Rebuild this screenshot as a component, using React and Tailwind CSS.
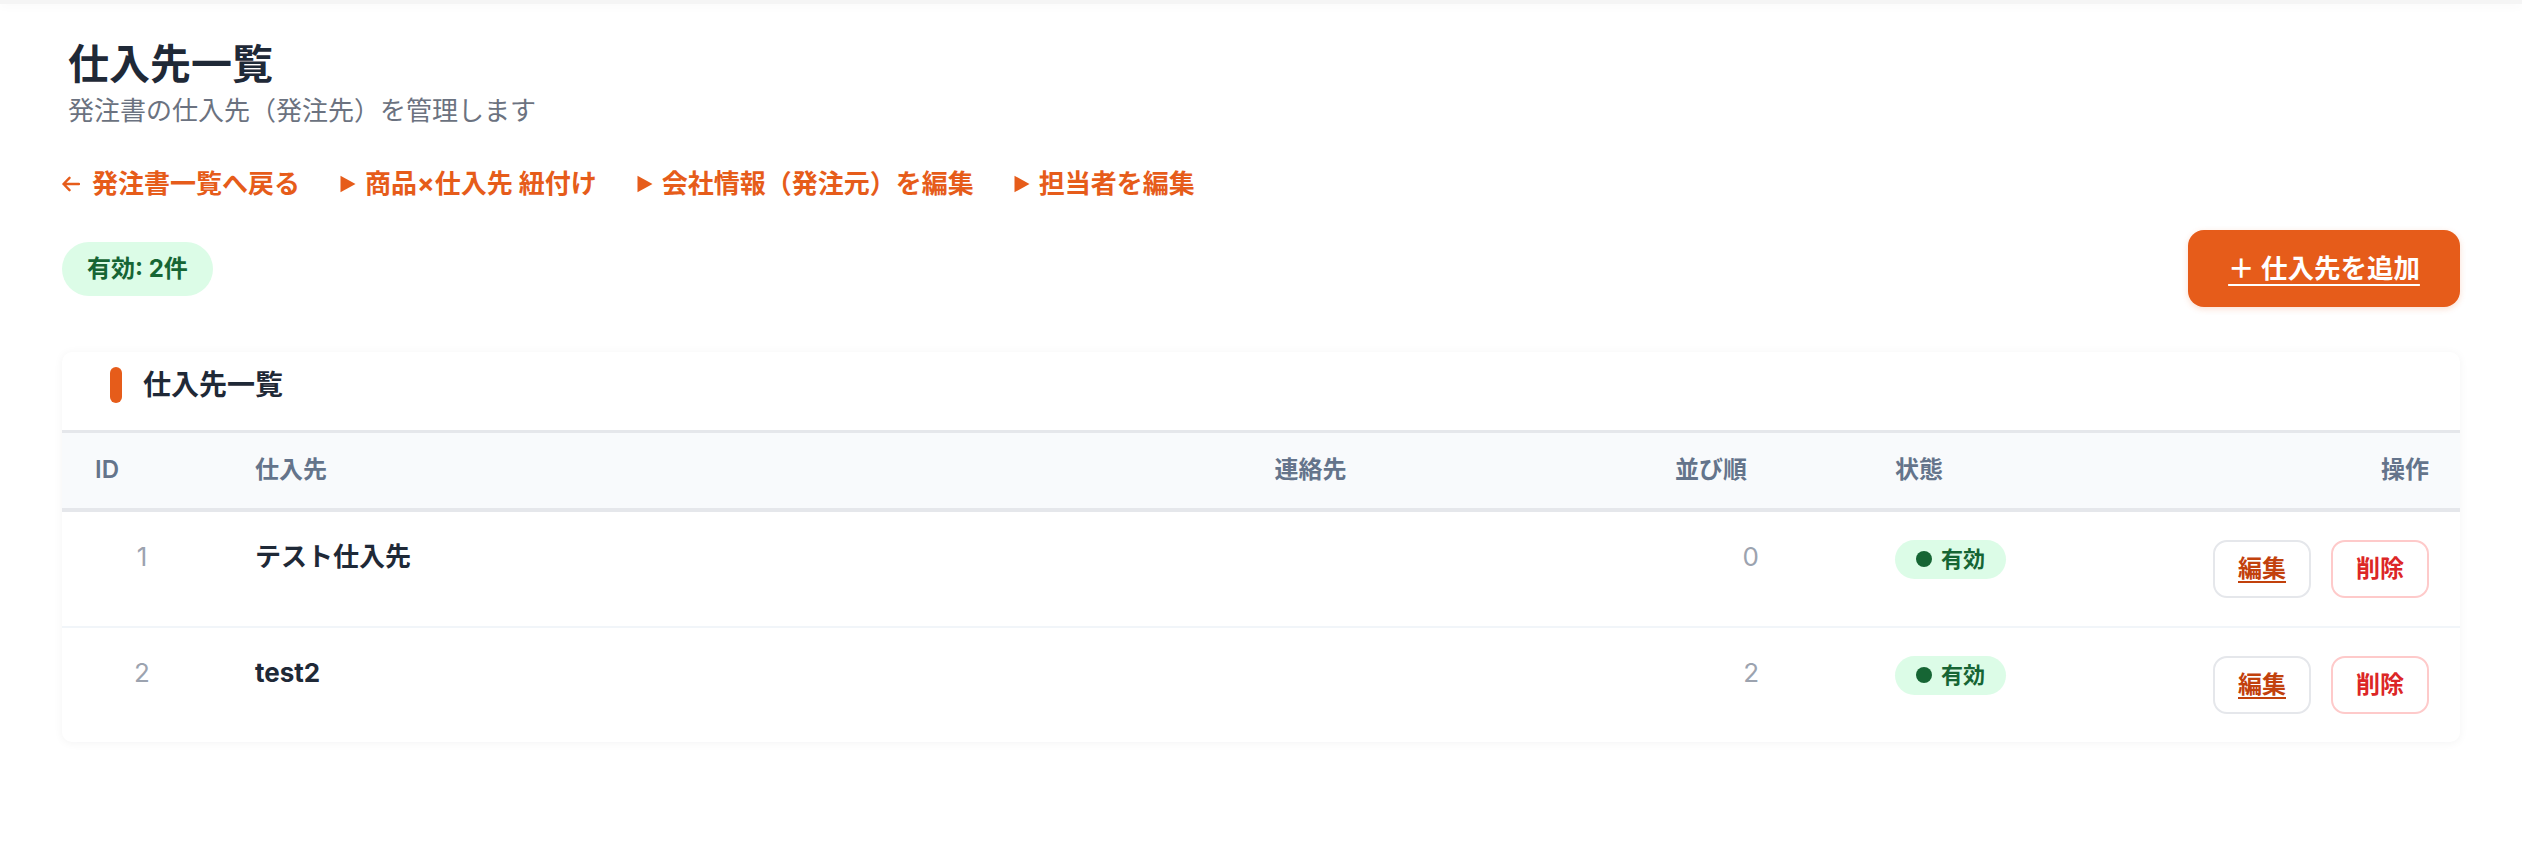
import React from "react";

const suppliers = [
  { id: 1, name: "テスト仕入先", contact: "", order: 0 },
  { id: 2, name: "test2", contact: "", order: 2 },
];

function Triangle() {
  return (
    <svg width="16" height="18" viewBox="0 0 16 18" className="shrink-0">
      <path d="M0.5 0.8L15.5 9L0.5 17.2Z" fill="currentColor" />
    </svg>
  );
}

function ArrowLeft() {
  return (
    <svg width="18" height="16" viewBox="0 0 18 16" fill="none" className="shrink-0">
      <path d="M7.5 1.8L1.5 8L7.5 14.2M1.5 8H17" stroke="currentColor" strokeWidth="2.4" strokeLinecap="round" strokeLinejoin="round" />
    </svg>
  );
}

export default function App() {
  return (
    <div className="min-h-screen bg-white [font-family:Inter,'Noto_Sans_CJK_JP',sans-serif]">
      <div className="h-[4px] bg-[#f5f5f5] shadow-[0_2px_10px_rgba(0,0,0,0.04)]" />

      <div className="px-[62px] pt-[34px]">
        {/* Page header */}
        <div className="ml-[6px]">
          <h1 className="text-[41px] leading-[52px] font-bold text-[#1f2937]">仕入先一覧</h1>
          <p className="mt-[3px] text-[26px] leading-[36px] text-[#6b7280]">
            発注書の仕入先（発注先）を管理します
          </p>
        </div>

        {/* Links */}
        <nav className="mt-[37px] flex items-center gap-[40px] text-[26px] leading-[36px] font-bold text-[#e65c1a]">
          <a href="#" className="flex items-center gap-[12px]">
            <ArrowLeft />
            発注書一覧へ戻る
          </a>
          <a href="#" className="flex items-center gap-[9px]">
            <Triangle />
            商品×仕入先 紐付け
          </a>
          <a href="#" className="flex items-center gap-[9px]">
            <Triangle />
            会社情報（発注元）を編集
          </a>
          <a href="#" className="flex items-center gap-[9px]">
            <Triangle />
            担当者を編集
          </a>
        </nav>

        {/* Toolbar */}
        <div className="mt-[28px] flex items-center justify-between">
          <span className="flex h-[54px] items-center rounded-full bg-[#dcfce7] px-[25px] text-[24px] font-bold text-[#166534]">
            有効: 2件
          </span>
          <button className="flex h-[77px] w-[272px] items-center justify-center rounded-[16px] bg-[#e65c1a] text-[26.5px] font-bold text-white underline decoration-2 underline-offset-[6px] shadow-[0_2px_6px_rgba(230,92,26,0.2)]">
            ＋ 仕入先を追加
          </button>
        </div>

        {/* Card */}
        <div className="mt-[45px] overflow-hidden rounded-[10px] bg-white shadow-[0_1px_10px_rgba(15,23,42,0.05)]">
          <div className="flex items-center gap-[21px] pl-[48px] pt-[15px] pb-[27px]">
            <span className="h-[36px] w-[12px] rounded-full bg-[#e65c1a]" />
            <h2 className="text-[28px] leading-[36px] font-bold text-[#1f2937]">仕入先一覧</h2>
          </div>

          <table className="w-full table-fixed border-collapse">
            <colgroup>
              <col className="w-[160px]" />
              <col className="w-[1019.5px]" />
              <col className="w-[358.5px]" />
              <col className="w-[262px]" />
              <col className="w-[288px]" />
              <col className="w-[312px]" />
            </colgroup>
            <thead>
              <tr className="border-t-[3px] border-b-[4px] border-[#e5e7eb] bg-[#f8fafc] text-[24px] font-semibold text-[#64748b]">
                <th className="h-[78px] pl-[33px] text-left font-semibold">ID</th>
                <th className="pl-[33px] text-left font-semibold">仕入先</th>
                <th className="pl-[33px] text-left font-semibold">連絡先</th>
                <th className="pr-[115px] text-right font-semibold">並び順</th>
                <th className="pl-[33px] text-left font-semibold">状態</th>
                <th className="pr-[33px] text-right font-semibold">操作</th>
              </tr>
            </thead>
            <tbody>
              {suppliers.map((s, i) => (
                <tr key={s.id} className={i < suppliers.length - 1 ? "border-b-2 border-[#f1f5f9]" : ""}>
                  <td className="px-[33px] pt-[28px] pb-[28px] align-top text-center text-[26px] leading-[34px] text-[#9ca3af]">
                    {s.id}
                  </td>
                  <td className="pl-[33px] pt-[28px] pb-[28px] align-top text-[26px] leading-[34px] font-bold text-[#1f2937]">
                    {s.name}
                  </td>
                  <td className="pl-[33px] pt-[28px] pb-[28px] align-top text-[26px] leading-[34px] text-[#6b7280]">
                    {s.contact}
                  </td>
                  <td className="pr-[103px] pt-[28px] pb-[28px] align-top text-right text-[26px] leading-[34px] text-[#9ca3af]">
                    {s.order}
                  </td>
                  <td className="pl-[33px] pt-[28px] pb-[28px] align-top">
                    <span className="inline-flex h-[39px] items-center gap-[9px] rounded-full bg-[#dcfce7] px-[21px] text-[22px] font-bold text-[#166534]">
                      <span className="h-[16px] w-[16px] rounded-full bg-[#166534]" />
                      有効
                    </span>
                  </td>
                  <td className="pr-[33px] pt-[28px] pb-[28px] align-top text-right">
                    <div className="inline-flex gap-[20px] align-top">
                      <button className="h-[58px] w-[98px] rounded-[14px] border-2 border-[#e5e7eb] bg-white text-[24px] font-bold text-[#c2410c] underline underline-offset-[4px]">
                        編集
                      </button>
                      <button className="h-[58px] w-[98px] rounded-[14px] border-2 border-[#fecaca] bg-white text-[24px] font-bold text-[#dc2626]">
                        削除
                      </button>
                    </div>
                  </td>
                </tr>
              ))}
            </tbody>
          </table>
        </div>
      </div>
    </div>
  );
}
